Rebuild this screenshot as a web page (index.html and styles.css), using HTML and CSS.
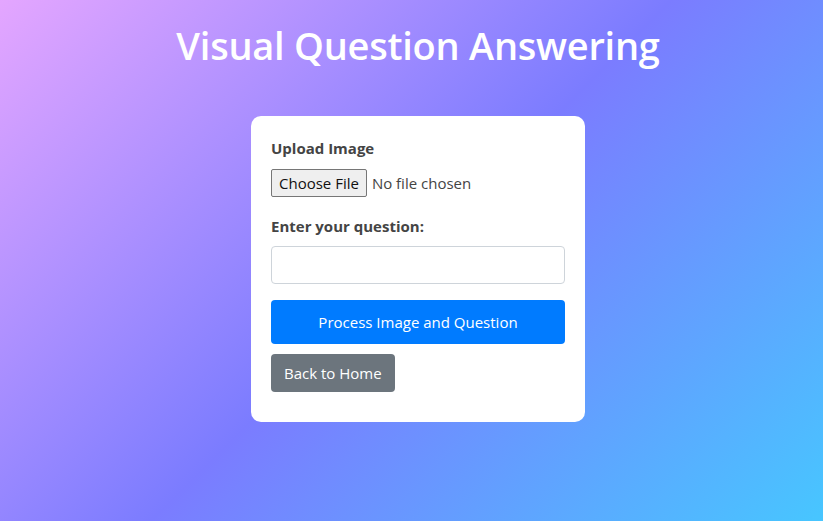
FILE: index.html
```html
<!DOCTYPE html>
<html lang="en">
<head>
<meta charset="utf-8">
<title>Visual Question Answering</title>
<link rel="stylesheet" href="styles.css">
</head>
<body>
<main class="page">
  <h1 class="title">Visual Question Answering</h1>
  <form class="card">
    <div class="group">
      <label class="label">Upload Image</label>
      <div class="file">
        <span class="file-btn">Choose File</span>
        <span class="file-name">No file chosen</span>
      </div>
    </div>
    <div class="group">
      <label class="label" for="q">Enter your question:</label>
      <input class="input" id="q" type="text">
    </div>
    <button class="btn btn-primary" type="button">Process Image and Question</button>
    <div class="back-row">
      <a class="btn btn-secondary" href="#">Back to Home</a>
    </div>
  </form>
</main>
</body>
</html>
```

FILE: styles.css
```css
* { box-sizing: border-box; }
html, body { height: 100%; }
body {
  margin: 0;
  font-family: "Open Sans", "Noto Sans", sans-serif;
  font-size: 16px;
  line-height: 1.5;
  color: #212529;
  background: linear-gradient(135deg, #e4a6ff 0%, #7b7cff 50%, #47c6ff 100%);
  min-height: 521px;
}
.page {
  display: flex;
  flex-direction: column;
  align-items: center;
  padding: 21px 0 0 13px;
}
.title {
  margin: 0 0 47px;
  font-size: 38px;
  font-weight: 600;
  line-height: 48px;
  color: #fff;
  letter-spacing: -0.25px;
}
.card {
  width: 334px;
  background: #fff;
  border-radius: 10px;
  padding: 20px 20px 30px;
  display: flex;
  flex-direction: column;
}
.group { display: flex; flex-direction: column; margin-bottom: 16px; }
.group + .group { margin-top: 1px; }
.label {
  font-weight: 700;
  font-size: 15px;
  color: #444;
  line-height: 24px;
  margin-bottom: 9px;
}
.group + .group .label { margin-bottom: 8px; }
.file { display: flex; align-items: center; gap: 5px; height: 28px; }
.file-btn {
  height: 28px;
  padding: 0 7px;
  display: flex;
  align-items: center;
  background: #efefef;
  border: 1px solid #767676;
  border-radius: 2px;
  font-size: 15px;
  color: #111;
}
.file-name { font-size: 15px; color: #444; }
.input {
  height: 38px;
  border: 1px solid #ced4da;
  border-radius: 4px;
  font: inherit;
  padding: 6px 12px;
}
.btn {
  font-family: inherit;
  font-size: 15px;
  line-height: 24px;
  border: none;
  border-radius: 4px;
  color: #fff;
  text-decoration: none;
  cursor: pointer;
}
.btn-primary {
  height: 44px;
  background: #007bff;
  width: 100%;
}
.back-row { display: flex; margin-top: 10px; }
.btn-secondary {
  background: #6c757d;
  height: 38px;
  padding: 7px 13px;
}
```
